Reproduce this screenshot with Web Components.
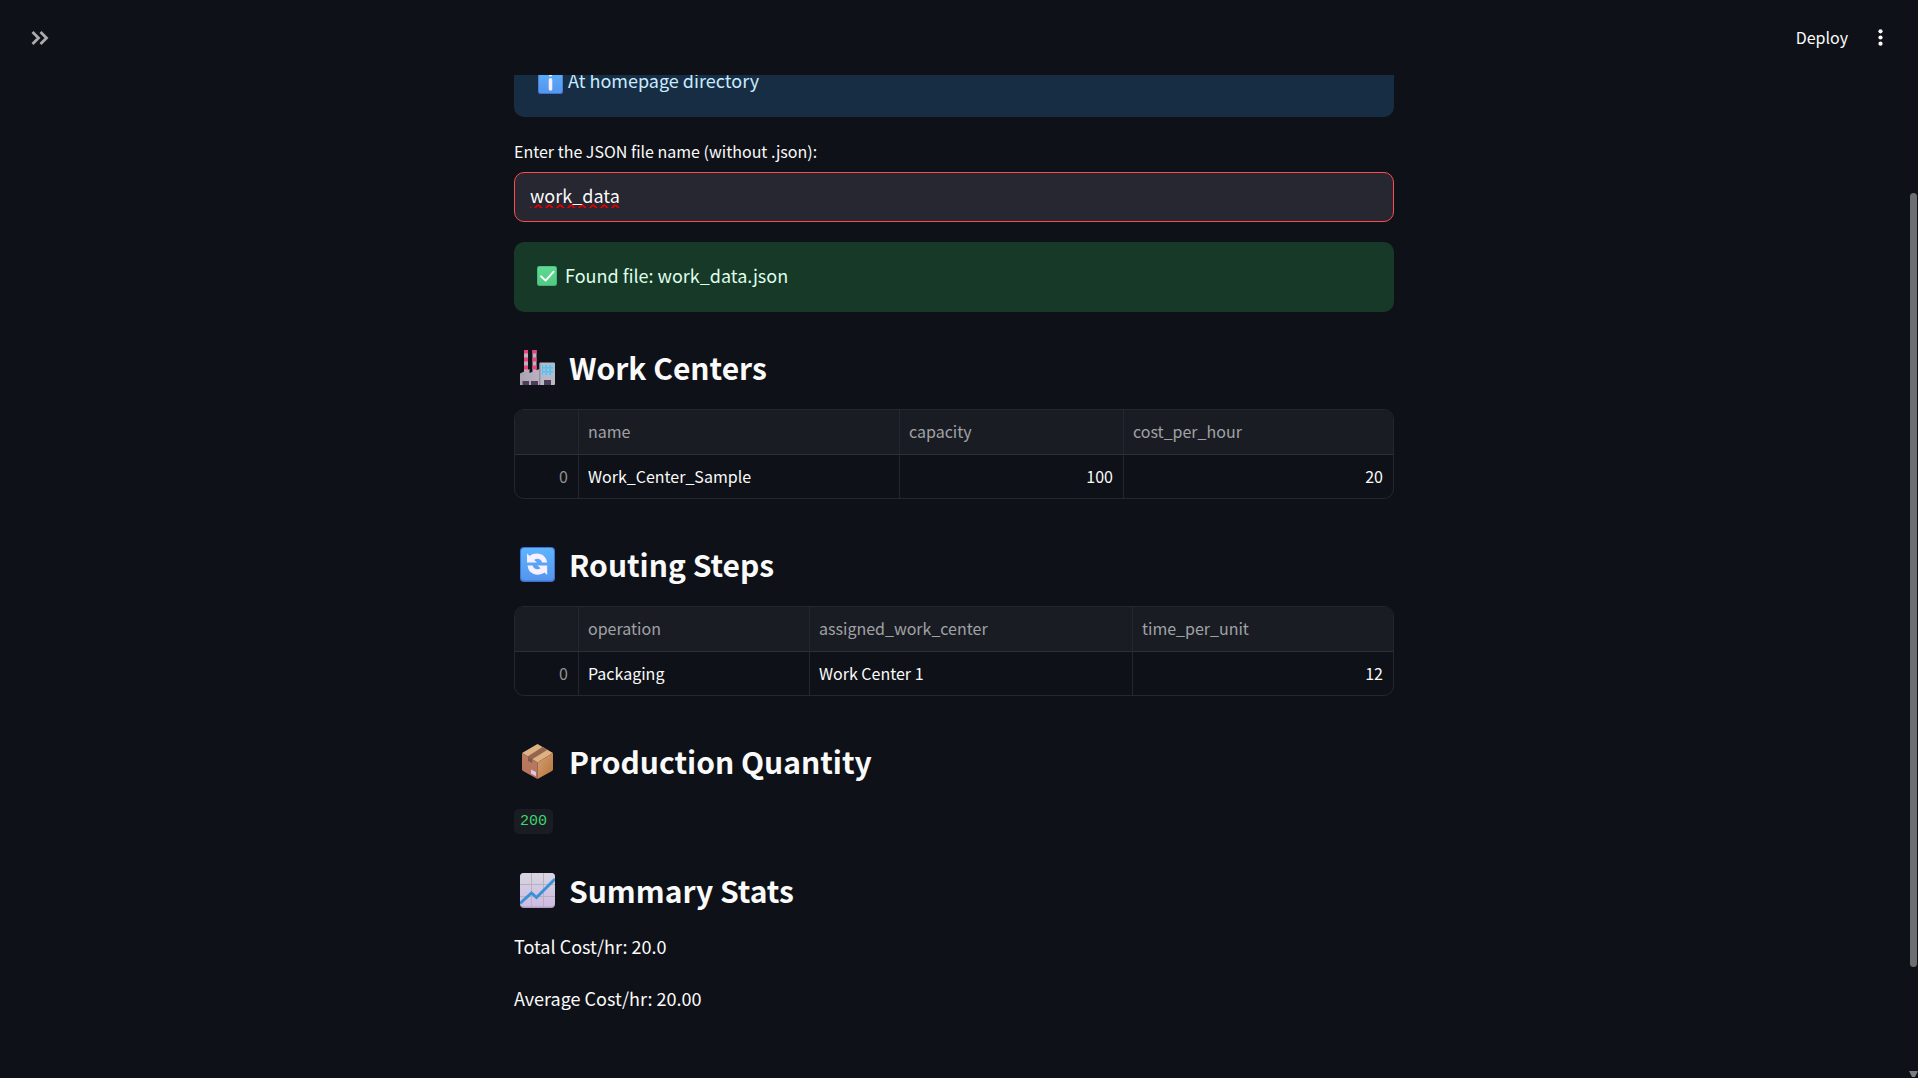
<!DOCTYPE html>
<html lang="en">
<head>
<meta charset="utf-8">
<title>Work data</title>
<style>
html, body { height: 100%; margin: 0; background: #0e1117; }
body { color: #fafafa; font-family: "Noto Sans CJK SC", "Open Sans", sans-serif; font-size: 18px; line-height: 32px; overflow: hidden; }
</style>
</head>
<body>
<app-shell>
  <status-box kind="info"><emoji-icon slot="icon" name="info"></emoji-icon>At homepage directory</status-box>
  <text-field label="Enter the JSON file name (without .json):" value="work_data"></text-field>
  <status-box kind="success"><emoji-icon slot="icon" name="check"></emoji-icon>Found file: work_data.json</status-box>
  <section-title icon="factory">Work Centers</section-title>
  <data-grid columns='[["name",321],["capacity",224],["cost_per_hour",0]]' rows='[["Work_Center_Sample",100,20]]'></data-grid>
  <section-title icon="cycle">Routing Steps</section-title>
  <data-grid columns='[["operation",231],["assigned_work_center",323],["time_per_unit",0]]' rows='[["Packaging","Work Center 1",12]]'></data-grid>
  <section-title icon="box">Production Quantity</section-title>
  <text-line><code-chip>200</code-chip></text-line>
  <section-title icon="chart">Summary Stats</section-title>
  <text-line>Total Cost/hr: 20.0</text-line>
  <text-line>Average Cost/hr: 20.00</text-line>
</app-shell>
<script>
const define = (name, html, setup) => customElements.define(name, class extends HTMLElement {
  connectedCallback() {
    if (this.shadowRoot) return;
    const root = this.attachShadow({ mode: 'open' });
    root.innerHTML = html;
    if (setup) setup(this, root);
  }
});

define('tool-bar', `
<style>
:host { display: flex; align-items: center; justify-content: space-between; height: 75px; flex: none; padding: 0 15px 0 25px; }
button { background: none; border: 0; margin: 0; padding: 0; color: #fafafa; font: 16px/30px "Noto Sans CJK SC", "Open Sans", sans-serif; display: flex; align-items: center; }
.right { display: flex; align-items: center; gap: 20px; }
.text { padding-bottom: 2px; }
</style>
<button aria-label="Open sidebar"><svg width="30" height="30" viewBox="0 0 30 30" fill="none" stroke="#a9abae" stroke-width="2.8"><path d="M7.500 9l6 6-6 6M15.500 9l6 6-6 6"/></svg></button>
<div class="right"><button class="text">Deploy</button><button aria-label="Main menu"><svg width="25" height="25" viewBox="0 0 25 25" fill="#fafafa"><circle cx="12.500" cy="6.300" r="2.100"/><circle cx="12.500" cy="12.500" r="2.100"/><circle cx="12.500" cy="18.700" r="2.100"/></svg></button></div>`);

define('scroll-track', `
<style>
:host { display: flex; flex-direction: column; align-items: center; width: 10px; }
.before { flex: 193; }
.thumb { flex: 774; width: 7px; border-radius: 4px; background: #6d6e72; }
.after { flex: 104; }
svg { display: block; }
</style>
<div class="before"></div><div class="thumb"></div><div class="after"></div>
<svg width="9" height="7" viewBox="0 0 9 7" fill="#7d7e82"><path d="M0 0h9L6 6H3z"/></svg>`);

define('app-shell', `
<style>
:host { display: flex; height: 100vh; }
.page { flex: 1; min-width: 0; display: flex; flex-direction: column; }
main { flex: 1; min-height: 0; overflow: hidden; }
.stack { max-width: 880px; margin: -28px auto 0; display: flex; flex-direction: column; gap: 20px; }
</style>
<div class="page"><tool-bar></tool-bar><main><div class="stack"><slot></slot></div></main></div>
<scroll-track></scroll-track>`);

define('status-box', `
<style>
:host { display: flex; align-items: center; height: 70px; box-sizing: border-box; padding: 0 23px 2px; border-radius: 10px; }
:host([kind=info]) { background: #172d43; color: #c7ebff; --icon: 25px; gap: 5px; padding-left: 24px; }
:host([kind=success]) { background: #173928; color: #dffde9; --icon: 20px; gap: 8px; }
span { padding-bottom: 2px; }
</style>
<slot name="icon"></slot><span><slot></slot></span>`);

define('text-field', `
<style>
:host { display: flex; flex-direction: column; gap: 5px; }
label { font-size: 16px; line-height: 28px; padding-bottom: 2px; }
input { height: 50px; box-sizing: border-box; width: 100%; margin: 0; padding: 0 15px 4px; border: 1px solid #ff4b4b; border-radius: 10px; outline: none; background: #262730; color: #fafafa; font: inherit; line-height: 32px; text-decoration: underline wavy #e00000 2px; text-underline-offset: 1px; text-decoration-skip-ink: none; }
</style>
<label for="field"></label><input id="field" type="text" spellcheck="false">`, (el, root) => {
  root.querySelector('label').textContent = el.getAttribute('label');
  root.querySelector('input').value = el.getAttribute('value');
});

define('section-title', `
<style>
:host { display: block; padding: 14px 0 1px; --icon: 35px; }
h3 { margin: 0; padding-left: 6px; display: flex; align-items: center; gap: 14px; font-size: 30px; line-height: 42px; font-weight: 600; }
</style>
<h3><emoji-icon></emoji-icon><span><slot></slot></span></h3>`, (el, root) => {
  root.querySelector('emoji-icon').setAttribute('name', el.getAttribute('icon'));
});

define('text-line', `<style>:host { display: block; } p { margin: 0; line-height: 28px; padding-bottom: 4px; }</style><p><slot></slot></p>`);

define('code-chip', `
<style>
:host { display: flex; align-items: center; height: 28px; padding-top: 4px; margin-bottom: -4px; }
code { padding: 0 6px; border-radius: 5px; background: #1a1c24; color: #3dd56d; font: 15px/25px "Liberation Mono", monospace; }
</style>
<code><slot></slot></code>`);

define('data-grid', `
<style>
:host { display: block; margin-bottom: 10px; border: 1px solid #24272d; border-radius: 10px; overflow: hidden; }
table { width: 100%; border-collapse: separate; border-spacing: 0; table-layout: fixed; font-size: 16px; line-height: 24px; }
th, td { box-sizing: border-box; height: 43px; padding: 0 10px 2px 9px; font-weight: 400; text-align: left; border-right: 1px solid #24272d; }
th:last-child, td:last-child { border-right: 0; }
thead th { height: 45px; background: #1a1c24; color: #a0a2a5; border-bottom: 1px solid #2d3037; }
tbody th { color: #8f9194; text-align: right; }
td.num { text-align: right; }
</style>
<table><colgroup></colgroup><thead><tr></tr></thead><tbody></tbody></table>`, (el, root) => {
  const cols = JSON.parse(el.getAttribute('columns'));
  const rows = JSON.parse(el.getAttribute('rows'));
  root.querySelector('colgroup').innerHTML = '<col style="width:64px">' + cols.map(c => c[1] ? `<col style="width:${c[1]}px">` : '<col>').join('');
  root.querySelector('thead tr').innerHTML = '<th></th>' + cols.map(c => `<th scope="col">${c[0]}</th>`).join('');
  root.querySelector('tbody').innerHTML = rows.map((r, i) => `<tr><th scope="row">${i}</th>` + r.map(v => `<td class="${typeof v === 'number' ? 'num' : ''}">${v}</td>`).join('') + '</tr>').join('');
});

const tile = (id, a, b, edge) => `<defs><linearGradient id="${id}" x1="0" y1="0" x2="0" y2="1"><stop offset="0" stop-color="${a}"/><stop offset="1" stop-color="${b}"/></linearGradient></defs><rect width="35" height="35" rx="4" fill="${edge}"/><rect x="1" y="1" width="33" height="32.500" rx="3.500" fill="url(#${id})"/>`;
const icons = {
  info: tile('g', '#5cb0fb', '#5596ee', '#4272cf') + '<circle cx="17.500" cy="8" r="2.500" fill="#f6efff"/><rect x="15" y="12.500" width="5" height="18" rx="2.500" fill="#f6efff"/>',
  check: tile('g', '#5fdb93', '#52c984', '#3ea876') + '<path d="M7 18l8 7.500L29 10" fill="none" stroke="#fff" stroke-width="3.200" stroke-linecap="round" stroke-linejoin="round"/>',
  cycle: tile('g', '#5db5ff', '#5595ee', '#3f72cf') + '<g fill="#f8efff"><path d="M7 6.500l2.800 2.500C14 5.700 20.500 5.800 24.300 9.500c1.600 1.600 2.500 3.600 2.800 6h-5c-.8-3.500-4.900-4.900-8-2.600l2.900 2.600H7z"/><path d="M27.200 28l-2.800-2.500C20.200 28.600 14 28.300 10.200 24.700 8.600 23.100 7.900 21 7.600 18.500h5c.8 3.500 4.800 5 8 2.800L17.500 18.500h9.700z"/></g>',
  factory: `<defs><linearGradient id="w"><stop offset="0" stop-color="#aaa4ae"/><stop offset="1" stop-color="#bbb0c2"/></linearGradient></defs>
    <path d="M4 0h4v22H4zM12.500 0h4v22h-4z" fill="#b9b4bd"/><path d="M4 0h4v3.500H4zM4 7.500h4v4H4zM4 15.500h4v4H4zM12.500 0h4v3.500h-4zM12.500 7.500h4v4h-4zM12.500 15.500h4v4h-4z" fill="#ef3f7c"/>
    <path d="M0 35V23.500L9.500 19v4l10-4v16z" fill="url(#w)"/><rect x="19.500" y="12.500" width="15.500" height="22.500" rx="1" fill="#bbb7c4"/><path d="M19.500 13.500h1V35h-1z" fill="#968f9e"/>
    <path d="M2.500 31h6.500v4H2.500zM11 31h7v4h-7zM24 30h7v5h-7z" fill="#4c3e5b"/>
    <rect x="22" y="15" width="11" height="10" fill="#35a9e8"/><path d="M22.500 15h2.500v2.500h-2.500zM26.500 15h2.500v2.500h-2.500zM30.500 15h2.500v2.500h-2.500zM22.500 19h2.500v2.500h-2.500zM26.500 19h2.500v2.500h-2.500zM30.500 19h2.500v2.500h-2.500zM22.500 23h2.500v2h-2.500zM26.500 23h2.500v2h-2.500zM30.500 23h2.500v2h-2.500z" fill="#63dcff"/><path d="M25.200 15h1v10h-1zM29.200 15h1v10h-1zM22 17.700h11v1H22zM22 21.700h11v1H22z" fill="#a6b6cf"/>`,
  box: `<defs><linearGradient id="l" x2="0" y2="1"><stop offset="0" stop-color="#b87c63"/><stop offset="1" stop-color="#b97159"/></linearGradient><linearGradient id="r" x2="1" y2="1"><stop offset="0" stop-color="#d2a078"/><stop offset="1" stop-color="#b97338"/></linearGradient></defs>
    <path d="M17.500 0L33 9 17.500 18.500 2 9z" fill="#deb182"/><path d="M2 9l15.500 9.500V35L3 27q-1-.6-1-2z" fill="url(#l)"/><path d="M33 9l-15.500 9.500V35L32 27q1-.6 1-2z" fill="url(#r)"/>
    <path d="M7.500 12.500L22.500 3l5 2.800-15.300 9.500z" fill="#94654f"/><path d="M8 12.700l4.300 2.600v4L8 17z" fill="#805a51"/><path d="M11 25.500l5 2.500v4.300l-5-2.700z" fill="#dac9e4"/>`,
  chart: `<defs><linearGradient id="c" x2="0" y2="1"><stop offset="0" stop-color="#d9d5df"/><stop offset="1" stop-color="#cdbbe4"/></linearGradient></defs><rect width="35" height="35" rx="4" fill="#b39cc2"/><rect width="35" height="33.500" rx="4" fill="url(#c)"/>
    <path d="M11.500 0v34M23.500 0v34M0 11.500h35M0 23.500h35" stroke="#b8b0bf" fill="none"/><path d="M0 30.500L11.500 20l5 4.500L35 6" fill="none" stroke="#3992d8" stroke-width="3"/>`
};
define('emoji-icon', `<style>:host { display: block; flex: none; width: var(--icon); height: var(--icon); } svg { display: block; width: 100%; height: 100%; }</style>`, (el, root) => {
  root.innerHTML += `<svg viewBox="0 0 35 35" aria-hidden="true">${icons[el.getAttribute('name')] || ''}</svg>`;
});
</script>
</body>
</html>
